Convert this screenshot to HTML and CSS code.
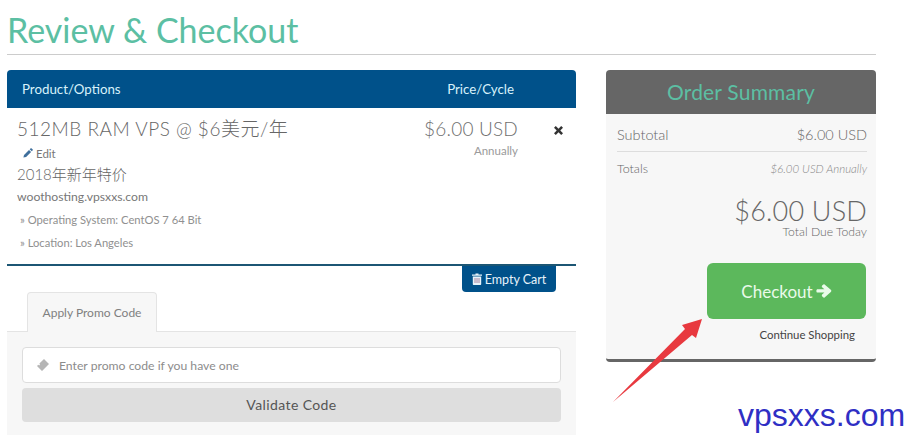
FILE: index.html
```html
<!DOCTYPE html>
<html lang="zh">
<head>
<meta charset="utf-8">
<title>Review &amp; Checkout</title>
<link rel="stylesheet" href="styles.css">
</head>
<body>
<div class="page">
  <h1 class="title">Review &amp; Checkout</h1>
  <div class="columns">
    <main class="cart">
      <div class="cart-head">
        <span>Product/Options</span>
        <span class="head-price">Price/Cycle</span>
      </div>
      <div class="item">
        <div class="item-info">
          <div class="item-name">512MB RAM VPS @ $6美元/年</div>
          <div class="item-edit">
            <svg class="ico-edit" viewBox="0 0 12 12"><path d="M0.5 11.5l0.7-3.2 6-6 2.5 2.5-6 6zM8 1.500l1-1c.4-.4 1-.4 1.400 0l1.100 1.100c.4.4.4 1 0 1.400l-1 1z" fill="#3f6f9c"/></svg>
            <span>Edit</span>
          </div>
          <div class="item-group">2018年新年特价</div>
          <div class="item-domain">woothosting.vpsxxs.com</div>
          <div class="item-opt">» Operating System: CentOS 7 64 Bit</div>
          <div class="item-opt">» Location: Los Angeles</div>
        </div>
        <div class="item-price">
          <div class="price-main">$6.00 USD</div>
          <div class="price-cycle">Annually</div>
        </div>
        <div class="item-remove">
          <svg class="ico-x" viewBox="0 0 10 10"><path d="M2 0L5 3 8 0 10 2 7 5 10 8 8 10 5 7 2 10 0 8 3 5 0 2z" fill="#333"/></svg>
        </div>
      </div>
      <div class="cart-actions">
        <button class="empty-btn">
          <svg class="ico-trash" viewBox="0 0 10 12"><path d="M3.500 1.500V.5h3v1H10v1.200H0V1.500zM.8 3.400h8.400V11c0 .6-.4 1-1 1H1.800c-.6 0-1-.4-1-1z" fill="#e8f3fa"/><path d="M3 5v5M5 5v5M7 5v5" stroke="#9a6a8c" stroke-width=".8"/></svg>
          <span>Empty Cart</span>
        </button>
      </div>
      <div class="tabs">
        <div class="tab">Apply Promo Code</div>
      </div>
      <div class="pane">
        <div class="promo-input">
          <svg class="ico-ticket" viewBox="0 0 14 14"><path d="M8 1l5 5-7 7-5-5 1.200-1.200 1 .6.8-.8-.6-1z" fill="#b5b5b5"/></svg>
          <span>Enter promo code if you have one</span>
        </div>
        <button class="validate-btn">Validate Code</button>
      </div>
    </main>
    <aside class="summary">
      <div class="summary-head">Order Summary</div>
      <div class="summary-body">
        <div class="row row-sub"><span>Subtotal</span><span>$6.00 USD</span></div>
        <div class="row row-tot"><span>Totals</span><em>$6.00 USD Annually</em></div>
        <div class="due">
          <div class="due-amt">$6.00 USD</div>
          <div class="due-label">Total Due Today</div>
        </div>
        <button class="checkout-btn">
          <span>Checkout</span>
          <svg class="ico-arrow" viewBox="0 0 16 14"><path d="M8.600.6l6.200 5.200c.7.6.7 1.600 0 2.200l-6.200 5.400c-.6.5-1.200.1-1.800-.5l-.7-.7c-.5-.6-.5-1.200 0-1.700L8.400 8.600H1.600C.8 8.600.4 8 .4 7.300V6.500C.4 5.800.8 5.200 1.600 5.200h6.800L6.100 3.300c-.5-.5-.5-1.100 0-1.700l.7-.7C7.400.3 8 .1 8.600.6z" fill="#eafaea"/></svg>
        </button>
        <div class="continue">Continue Shopping</div>
      </div>
    </aside>
  </div>
</div>
<svg class="red-arrow" viewBox="0 0 92 88"><path d="M1 86L73 13 70 9 90 3 84 22 80 19z" fill="#e8393f"/></svg>
<div class="watermark">vpsxxs.com</div>
</body>
</html>
```
FILE: styles.css
```css
* { box-sizing: border-box; }
html, body { margin: 0; padding: 0; height: 100%; overflow: hidden; background: #fff; }
body { font-family: "Lato", "Noto Sans CJK SC", sans-serif; color: #666; position: relative; }
.page { width: 869px; margin-left: 7px; }
.title {
  margin: 0 0 15px;
  height: 55px;
  line-height: 60px;
  font-size: 34px;
  font-weight: 400;
  color: #5cbfa3;
  border-bottom: 1px solid #ccc;
}
.columns { display: flex; gap: 30px; align-items: flex-start; }
.cart { width: 569px; }
.cart-head {
  height: 38px;
  display: flex;
  align-items: center;
  justify-content: space-between;
  padding: 0 62px 0 15px;
  background: #00518a;
  color: #d8f2fb;
  font-size: 13.300px;
  border-radius: 4px 4px 0 0;
}
.item {
  height: 158px;
  display: flex;
  border-bottom: 2px solid #1c5674;
  padding: 9px 0 0 10px;
}
.item-info { flex: 1; }
.item-name { font-size: 19px; line-height: 24px; font-weight: 300; color: #666; letter-spacing: 0.5px; }
.item-edit { display: flex; align-items: center; gap: 3px; margin: 5px 0 0 6px; height: 14px; font-size: 11.500px; color: #777; }
.ico-edit { width: 10px; height: 10px; }
.item-group { font-size: 15px; line-height: 20px; margin-top: 4px; font-weight: 300; color: #666; }
.item-domain { font-size: 12.200px; line-height: 22px; margin-top: 2px; color: #777; }
.item-opt { font-size: 11.200px; line-height: 23px; margin-left: 3px; color: #909090; }
.item-price { width: 120px; margin-right: -9px; padding-right: 9px; text-align: right; }
.price-main { font-size: 19px; line-height: 24px; font-weight: 300; color: #707070; letter-spacing: 0.2px; }
.price-cycle { font-size: 11.500px; line-height: 20px; margin-top: 0; color: #9a9a9a; }
.item-remove { width: 58px; padding: 9px 0 0 36px; }
.ico-x { width: 9px; height: 9px; display: block; }
.cart-actions { height: 26px; display: flex; justify-content: flex-end; padding-right: 20px; }
.empty-btn {
  width: 94px;
  height: 26px;
  border: 0;
  padding: 0;
  background: #00518a;
  color: #e8f3fa;
  font: inherit;
  font-size: 12.500px;
  border-radius: 0 0 4px 4px;
  display: flex;
  align-items: center;
  justify-content: center;
  gap: 3px;
}
.ico-trash { width: 10px; height: 12px; }
.tabs { height: 40px; padding-left: 20px; border-bottom: 1px solid #e4e4e4; }
.tab {
  width: 130px;
  height: 40px;
  background: #f7f7f7;
  border: 1px solid #e4e4e4;
  border-bottom: 0;
  border-radius: 4px 4px 0 0;
  text-align: center;
  font-size: 12px;
  line-height: 40px;
  color: #808080;
}
.pane { height: 103px; background: #f7f7f7; padding: 15px 15px 0; }
.promo-input {
  height: 36px;
  background: #fff;
  border: 1px solid #ddd;
  border-radius: 4px;
  display: flex;
  align-items: center;
  padding-left: 13px;
  font-size: 12.200px;
  color: #8c8c8c;
  gap: 9px;
}
.ico-ticket { width: 14px; height: 14px; }
.validate-btn {
  display: block;
  width: 100%;
  height: 34px;
  margin-top: 5px;
  padding: 0 0 2px;
  border: 0;
  border-radius: 4px;
  background: #dedede;
  font: inherit;
  font-size: 14px;
  color: #555;
  letter-spacing: 0.4px;
}
.summary { width: 270px; }
.summary-head {
  height: 44px;
  background: #666;
  border-radius: 4px 4px 0 0;
  text-align: center;
  font-size: 21px;
  line-height: 44px;
  color: #5cbfa3;
  letter-spacing: 0.2px;
}
.summary-body {
  height: 248px;
  background: #f7f7f7;
  border-bottom: 3px solid #666;
  border-radius: 0 0 4px 4px;
  padding: 0 9px 0 11px;
}
.row { display: flex; justify-content: space-between; align-items: center; }
.row-sub { height: 38px; padding-top: 4px; font-size: 14.500px; font-weight: 300; color: #666; border-bottom: 1px solid #ddd; }
.row-tot { height: 32px; font-size: 12.500px; font-weight: 300; color: #666; }
.row-tot em { font-size: 11.500px; color: #888; }
.due { text-align: right; margin-top: 10px; height: 47px; }
.due-amt { font-size: 27px; line-height: 34px; font-weight: 300; color: #666; letter-spacing: 0.2px; }
.due-label { font-size: 12.200px; line-height: 14px; margin-top: -3px; font-weight: 300; color: #666; }
.checkout-btn {
  display: flex;
  align-items: center;
  justify-content: center;
  gap: 3px;
  width: 159px;
  height: 56px;
  margin: 22px 0 0 90px;
  border: 0;
  border-radius: 6px;
  background: #5cb85c;
  font: inherit;
  font-size: 17px;
  color: #eafaea;
}
.ico-arrow { width: 16px; height: 14px; }
.continue { margin: 9px 12px 0 0; text-align: right; font-size: 11.400px; color: #444; }
.red-arrow { position: absolute; left: 612px; top: 316px; width: 92px; height: 88px; }
.watermark {
  position: absolute;
  left: 738px;
  top: 397px;
  font-family: "Liberation Sans", sans-serif;
  font-size: 32px;
  line-height: 36px;
  color: #2f2fc4;
}
```
